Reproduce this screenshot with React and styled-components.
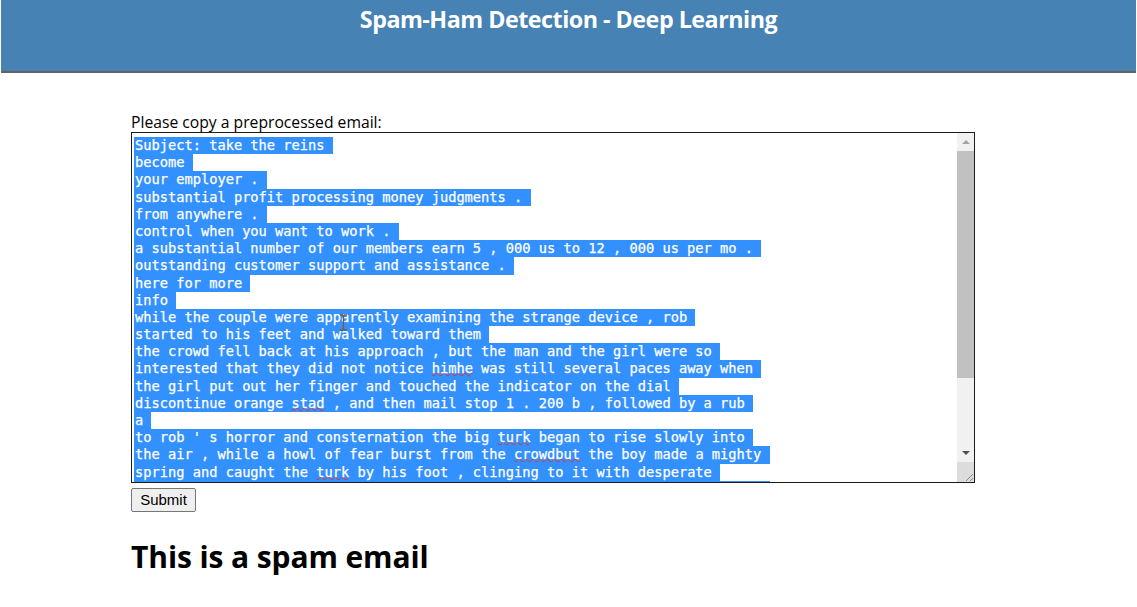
import React from 'react';
import styled, { createGlobalStyle } from 'styled-components';

const GlobalStyle = createGlobalStyle`
    body {
        margin: 0;
        background: #ffffff;
        font-family: "Open Sans", "Noto Sans", sans-serif;
    }
`

const Header = styled.header`
    height: 71px;
    margin: 0 1px;
    background: #4682b4;
    border-bottom: 2px solid #67625f;
`

const Title = styled.h1`
    margin: 0;
    padding-top: 3px;
    text-align: center;
    color: #ffffff;
    font-size: 23.3px;
    font-weight: 700;
    letter-spacing: -0.5px;
`

const Main = styled.main`
    padding: 39px 0 0 131px;
`

const Label = styled.div`
    font-size: 15.7px;
    line-height: 20px;
    color: #000000;
`

const EmailBox = styled.div`
    position: relative;
    display: flex;
    width: 844px;
    height: 351px;
    box-sizing: border-box;
    border: 1px solid #1b1b1b;
`

const TextArea = styled.div`
    flex: 1;
    overflow: hidden;
    padding: 4px 0 0 2px;
    font-family: "DejaVu Sans Mono", "Liberation Mono", monospace;
    font-size: 13.7px;
    line-height: 17.2px;
    white-space: pre;
    -webkit-text-stroke: 0.25px #ffffff;
`

const Line = styled.div`
    height: 17.2px;
`

const Selected = styled.span`
    display: inline-block;
    height: 17.2px;
    background: #3390ff;
    color: #ffffff;
    padding-left: 1px;
`

const Misspelled = styled.span`
    text-decoration: underline wavy #e0302a;
    text-decoration-thickness: 1px;
    text-decoration-skip-ink: none;
    text-underline-offset: -1px;
`

const Scrollbar = styled.div`
    display: flex;
    flex-direction: column;
    width: 17px;
    background: #f1f1f1;
`

const ArrowButton = styled.div`
    display: flex;
    align-items: center;
    justify-content: center;
    height: 18px;
`

const Arrow = styled.div`
    width: 0;
    height: 0;
    border-left: 4px solid transparent;
    border-right: 4px solid transparent;
    ${p => p.down
        ? 'border-top: 4px solid #505050;'
        : 'border-bottom: 4px solid #a3a3a3;'}
`

const Thumb = styled.div`
    height: 227px;
    background: #c1c1c1;
`

const Track = styled.div`
    flex: 1;
`

const Corner = styled.div`
    height: 20px;
    background: #dcdcdc;
    display: flex;
    align-items: flex-end;
    justify-content: flex-end;
`

const Cursor = styled.svg`
    position: absolute;
    left: 207px;
    top: 181px;
`

const SubmitButton = styled.button`
    display: block;
    margin-top: 5px;
    width: 65px;
    height: 24px;
    padding: 0;
    font-family: "Liberation Sans", Arial, sans-serif;
    font-size: 15px;
    line-height: 18px;
    color: #000000;
    background: #efefef;
    border: 1px solid #767676;
    border-radius: 2px;
`

const Result = styled.h2`
    margin: 25px 0 0;
    font-size: 30px;
    line-height: 40px;
    font-weight: 700;
    letter-spacing: -0.1px;
    color: #000000;
`

const lines = [
    ['Subject: take the reins '],
    ['become '],
    ['your employer . '],
    ['substantial profit processing money judgments . '],
    ['from anywhere . '],
    ['control when you want to work . '],
    ['a substantial number of our members earn 5 , 000 us to 12 , 000 us per mo . '],
    ['outstanding customer support and assistance . '],
    ['here for more '],
    ['info '],
    ['while the couple were apparently examining the strange device , rob '],
    ['started to his feet and walked toward them '],
    ['the crowd fell back at his approach , but the man and the girl were so '],
    ['interested that they did not notice ', { bad: 'himhe' }, ' was still several paces away when '],
    ['the girl put out her finger and touched the indicator on the dial '],
    ['discontinue orange ', { bad: 'stad' }, ' , and then mail stop 1 . 200 b , followed by a rub '],
    ['a '],
    ['to rob \' s horror and consternation the big ', { bad: 'turk' }, ' began to rise slowly into '],
    ['the air , while a howl of fear burst from the ', { bad: 'crowdbut' }, ' the boy made a mighty '],
    ['spring and caught the ', { bad: 'turk' }, ' by his foot , clinging to it with desperate '],
    ['energy , and was carried upward until the turk reached the ceiling of a hall '],
]

function App() {
    return (
        <>
            <GlobalStyle />
            <Header>
                <Title>Spam-Ham Detection - Deep Learning</Title>
            </Header>
            <Main>
                <Label>Please copy a preprocessed email:</Label>
                <EmailBox>
                    <TextArea>
                        {lines.map((parts, i) => (
                            <Line key={i}>
                                <Selected>
                                    {parts.map((p, j) =>
                                        typeof p === 'string'
                                            ? p
                                            : <Misspelled key={j}>{p.bad}</Misspelled>
                                    )}
                                </Selected>
                            </Line>
                        ))}
                    </TextArea>
                    <Scrollbar>
                        <ArrowButton><Arrow /></ArrowButton>
                        <Thumb />
                        <Track />
                        <ArrowButton><Arrow down /></ArrowButton>
                        <Corner>
                            <svg width="12" height="12" viewBox="0 0 12 12">
                                <path d="M11 4 L4 11 M11 8 L8 11" stroke="#8a8a8a" strokeWidth="1" />
                            </svg>
                        </Corner>
                    </Scrollbar>
                    <Cursor width="9" height="17" viewBox="0 0 9 17">
                        <path d="M1 1 H3.5 L4.5 2 L5.5 1 H8 M4.5 2 V15 M1 16 H3.5 L4.5 15 L5.5 16 H8"
                            stroke="#7a5a3a" strokeWidth="1.4" fill="none" />
                    </Cursor>
                </EmailBox>
                <SubmitButton>Submit</SubmitButton>
                <Result>This is a spam email</Result>
            </Main>
        </>
    )
}

export default App
